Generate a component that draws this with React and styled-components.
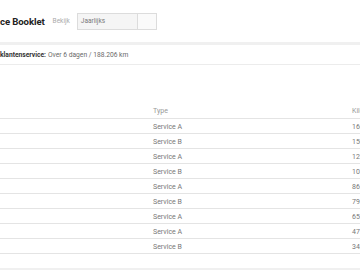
import React from "react";
import styled, { createGlobalStyle } from "styled-components";

const Global = createGlobalStyle`
  html, body { margin: 0; padding: 0; background: #fff; overflow: hidden; }
  body { font-family: Roboto, "Liberation Sans", sans-serif; width: 360px; height: 270px; }
`;

const Page = styled.div`
  width: 360px;
  height: 270px;
  overflow: hidden;
  display: flex;
  flex-direction: column;
`;

const Header = styled.div`
  height: 42px;
  display: flex;
  align-items: center;
  white-space: nowrap;
`;

const Title = styled.h1`
  margin: 0;
  font-size: 9.6px;
  font-weight: 700;
  color: #222;
  letter-spacing: -0.1px;
`;

const Label = styled.span`
  margin-left: 8px;
  font-size: 6.5px;
  color: #aaa;
`;

const Select = styled.div`
  margin-left: 7px;
  width: 80px;
  height: 17px;
  box-sizing: border-box;
  border: 1px solid #dcdcdc;
  display: flex;
`;

const SelectValue = styled.div`
  flex: 1;
  background: #f5f5f5;
  font-size: 6.5px;
  color: #777;
  display: flex;
  align-items: center;
  padding-left: 3px;
`;

const SelectButton = styled.div`
  width: 18px;
  border-left: 1px solid #dcdcdc;
  background: #fafafa;
`;

const Band = styled.div`
  height: ${(p) => p.$h || 3}px;
  background: #f0f0f0;
  flex-shrink: 0;
`;

const Info = styled.div`
  height: 19px;
  border-bottom: 1px solid #ececec;
  display: flex;
  align-items: center;
  font-size: 6.7px;
  color: #6a6a6a;
  white-space: nowrap;
  flex-shrink: 0;
`;

const Bold = styled.b`
  color: #333;
  font-weight: 700;
  margin-right: 2px;
`;

const Table = styled.div`
  margin-top: 38px;
  width: 460px;
  flex-shrink: 0;
`;

const Row = styled.div`
  display: grid;
  grid-template-columns: 153px 199px 108px;
  height: ${(p) => (p.$head ? 16 : 15)}px;
  box-sizing: border-box;
  border-bottom: 1px solid #e4e4e4;
  align-items: center;
  font-size: 7px;
  color: ${(p) => (p.$head ? "#999" : "#777")};
  white-space: nowrap;
`;

const Cell = styled.div`
  padding-top: ${(p) => (p.$head ? 0 : 2)}px;
`;

const Spacer = styled.div`
  flex: 1;
`;

const rows = [
  ["Service A", "168.206 km"],
  ["Service B", "150.412 km"],
  ["Service A", "125.990 km"],
  ["Service B", "104.318 km"],
  ["Service A", "86.702 km"],
  ["Service B", "79.115 km"],
  ["Service A", "65.430 km"],
  ["Service A", "47.208 km"],
  ["Service B", "34.977 km"],
];

export default function App() {
  return (
    <Page>
      <Global />
      <Header>
        <Title>ce Booklet</Title>
        <Label>Bekijk</Label>
        <Select>
          <SelectValue>Jaarlijks</SelectValue>
          <SelectButton />
        </Select>
      </Header>
      <Band />
      <Info>
        <Bold>klantenservice:</Bold> Over 6 dagen / 188.206 km
      </Info>
      <Table>
        <Row $head>
          <Cell $head />
          <Cell $head>Type</Cell>
          <Cell $head>Kilometerstand</Cell>
        </Row>
        {rows.map((r, i) => (
          <Row key={i}>
            <Cell />
            <Cell>{r[0]}</Cell>
            <Cell>{r[1]}</Cell>
          </Row>
        ))}
      </Table>
      <Spacer />
      <Band $h={2} />
    </Page>
  );
}
